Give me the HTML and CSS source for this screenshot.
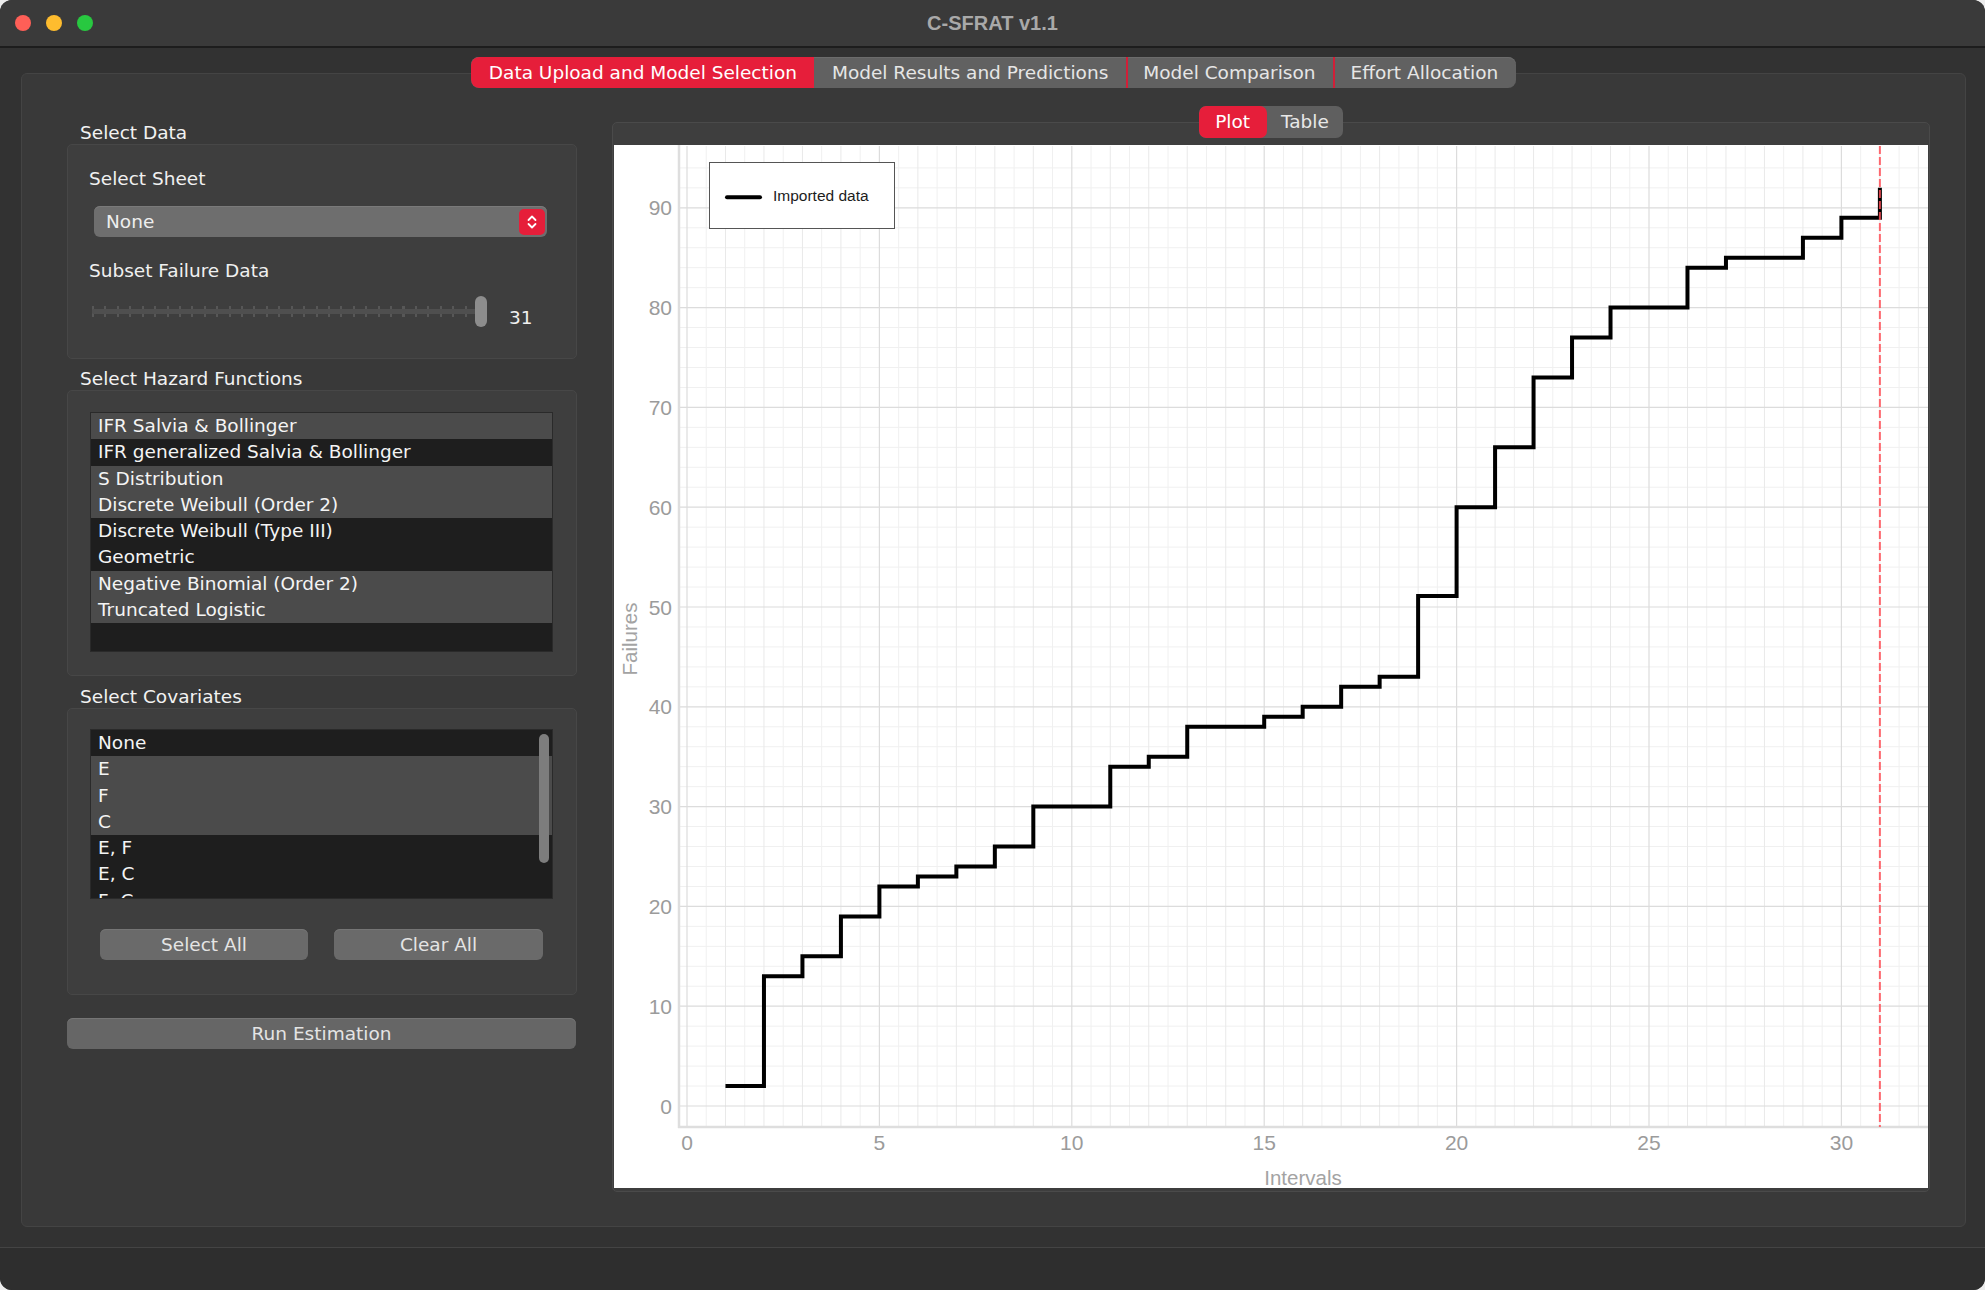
FILE: index.html
```html
<!DOCTYPE html>
<html>
<head>
<meta charset="utf-8">
<title>C-SFRAT v1.1</title>
<link rel="stylesheet" href="styles.css">
</head>
<body>
<div class="window">
  <div class="titlebar">
    <div class="lights">
      <span class="light red"></span>
      <span class="light yellow"></span>
      <span class="light green"></span>
    </div>
    <div class="title">C-SFRAT v1.1</div>
    <div></div>
  </div>

  <div class="main">
    <div class="tabbar">
      <div class="tab active">Data Upload and Model Selection</div>
      <div class="tab">Model Results and Predictions</div>
      <div class="tab sep">Model Comparison</div>
      <div class="tab sep">Effort Allocation</div>
    </div>

    <div class="pane">
      <div class="leftcol">
        <section class="group">
          <div class="group-title">Select Data</div>
          <div class="group-box box-data">
            <div class="label">Select Sheet</div>
            <div class="combo">
              <span>None</span>
              <span class="combo-btn">
                <svg width="12" height="20" viewBox="0 0 12 20"><path d="M2.5 8 L6 4.5 L9.5 8 M2.5 12 L6 15.5 L9.5 12" fill="none" stroke="#fff" stroke-width="1.8" stroke-linecap="round" stroke-linejoin="round"/></svg>
              </span>
            </div>
            <div class="label label-gap">Subset Failure Data</div>
            <div class="slider-row">
              <div class="slider">
                <div class="slider-ticks"></div>
                <div class="slider-groove"></div>
                <div class="slider-handle"></div>
              </div>
              <div class="slider-value">31</div>
            </div>
          </div>
        </section>

        <section class="group group-next">
          <div class="group-title">Select Hazard Functions</div>
          <div class="group-box box-hazard">
            <div class="list list-hazard">
              <div class="row g">IFR Salvia &amp; Bollinger</div>
              <div class="row">IFR generalized Salvia &amp; Bollinger</div>
              <div class="row g">S Distribution</div>
              <div class="row g">Discrete Weibull (Order 2)</div>
              <div class="row">Discrete Weibull (Type III)</div>
              <div class="row">Geometric</div>
              <div class="row g">Negative Binomial (Order 2)</div>
              <div class="row g">Truncated Logistic</div>
            </div>
          </div>
        </section>

        <section class="group group-next2">
          <div class="group-title">Select Covariates</div>
          <div class="group-box box-cov">
            <div class="list list-cov">
              <div class="row">None</div>
              <div class="row g">E</div>
              <div class="row g">F</div>
              <div class="row g">C</div>
              <div class="row">E, F</div>
              <div class="row">E, C</div>
              <div class="row">F, C</div>
              <div class="scroll-thumb"></div>
            </div>
            <div class="btn-row">
              <div class="btn btn-sel">Select All</div>
              <div class="btn btn-clear">Clear All</div>
            </div>
          </div>
        </section>

        <div class="btn btn-run">Run Estimation</div>
      </div>

      <div class="rightcol">
        <div class="seg">
          <div class="seg-btn seg-plot active">Plot</div>
          <div class="seg-btn seg-table">Table</div>
        </div>
        <div class="plotframe">
          <div class="canvas">
            <svg class="plot" width="1314" height="1043" viewBox="0 0 1314 1043">
              <path class="grid-minor" d="M92.24 1V982M130.72 1V982M169.2 1V982M207.68 1V982M246.16 1V982M284.64 1V982M323.12 1V982M361.6 1V982M400.08 1V982M438.56 1V982M477.04 1V982M515.52 1V982M554 1V982M592.48 1V982M630.96 1V982M669.44 1V982M707.92 1V982M746.4 1V982M784.88 1V982M823.36 1V982M861.84 1V982M900.32 1V982M938.8 1V982M977.28 1V982M1015.76 1V982M1054.24 1V982M1092.72 1V982M1131.2 1V982M1169.68 1V982M1208.16 1V982M1246.64 1V982M1285.12 1V982"/>
              <path class="grid-minor" d="M65 941.04H1314M65 921.08H1314M65 901.12H1314M65 881.16H1314M65 841.24H1314M65 821.28H1314M65 801.32H1314M65 781.36H1314M65 741.44H1314M65 721.48H1314M65 701.52H1314M65 681.56H1314M65 641.64H1314M65 621.68H1314M65 601.72H1314M65 581.76H1314M65 541.84H1314M65 521.88H1314M65 501.92H1314M65 481.96H1314M65 442.04H1314M65 422.08H1314M65 402.12H1314M65 382.16H1314M65 342.24H1314M65 322.28H1314M65 302.32H1314M65 282.36H1314M65 242.44H1314M65 222.48H1314M65 202.52H1314M65 182.56H1314M65 142.64H1314M65 122.68H1314M65 102.72H1314M65 82.76H1314M65 42.84H1314M65 22.88H1314"/>
              <path class="grid-unit" d="M111.48 1V982M149.96 1V982M188.44 1V982M226.92 1V982M303.88 1V982M342.36 1V982M380.84 1V982M419.32 1V982M496.28 1V982M534.76 1V982M573.24 1V982M611.72 1V982M688.68 1V982M727.16 1V982M765.64 1V982M804.12 1V982M881.08 1V982M919.56 1V982M958.04 1V982M996.52 1V982M1073.48 1V982M1111.96 1V982M1150.44 1V982M1188.92 1V982M1265.88 1V982M1304.36 1V982"/>
              <path class="grid-major" d="M73 1V982M265.4 1V982M457.8 1V982M650.2 1V982M842.6 1V982M1035 1V982M1227.4 1V982"/>
              <path class="grid-major" d="M65 961H1314M65 861.2H1314M65 761.4H1314M65 661.6H1314M65 561.8H1314M65 462H1314M65 362.2H1314M65 262.4H1314M65 162.6H1314M65 62.8H1314"/>
              <path class="axis" d="M65 0V983M64 982H1314"/>

              <rect class="legend-box" x="95.5" y="17.5" width="185" height="66"/>
              <path class="legend-line" d="M113 52.3H146"/>
              <text class="legend-text" x="159" y="55.8">Imported data</text>

              <path class="step" d="M111.48 941.04H149.96V831.26H188.44V811.3H226.92V771.38H265.4V741.44H303.88V731.46H342.36V721.48H380.84V701.52H419.32V661.6H496.28V621.68H534.76V611.7H573.24V581.76H650.2V571.78H688.68V561.8H727.16V541.84H765.64V531.86H804.12V451.02H842.6V362.2H881.08V302.32H919.56V232.46H958.04V192.54H996.52V162.6H1073.48V122.68H1111.96V112.7H1188.92V92.74H1227.4V72.78H1265.88V42.84"/>
              <path class="cutoff" d="M1265.88 1V982"/>

              <text class="tick" x="58" y="968.5" text-anchor="end">0</text>
              <text class="tick" x="58" y="868.7" text-anchor="end">10</text>
              <text class="tick" x="58" y="768.9" text-anchor="end">20</text>
              <text class="tick" x="58" y="669.1" text-anchor="end">30</text>
              <text class="tick" x="58" y="569.3" text-anchor="end">40</text>
              <text class="tick" x="58" y="469.5" text-anchor="end">50</text>
              <text class="tick" x="58" y="369.7" text-anchor="end">60</text>
              <text class="tick" x="58" y="269.9" text-anchor="end">70</text>
              <text class="tick" x="58" y="170.1" text-anchor="end">80</text>
              <text class="tick" x="58" y="70.3" text-anchor="end">90</text>

              <text class="tick" x="73" y="1004.5" text-anchor="middle">0</text>
              <text class="tick" x="265.4" y="1004.5" text-anchor="middle">5</text>
              <text class="tick" x="457.8" y="1004.5" text-anchor="middle">10</text>
              <text class="tick" x="650.2" y="1004.5" text-anchor="middle">15</text>
              <text class="tick" x="842.6" y="1004.5" text-anchor="middle">20</text>
              <text class="tick" x="1035" y="1004.5" text-anchor="middle">25</text>
              <text class="tick" x="1227.4" y="1004.5" text-anchor="middle">30</text>

              <text class="axis-label" x="689" y="1039.5" text-anchor="middle">Intervals</text>
              <text class="axis-label" transform="translate(15 494) rotate(-90)" x="0" y="7.5" text-anchor="middle">Failures</text>
            </svg>
          </div>
        </div>
      </div>
    </div>
  </div>

  <div class="statusbar"></div>
</div>
</body>
</html>
```

FILE: styles.css
```css
* {
  box-sizing: border-box;
  margin: 0;
  padding: 0;
}

html,
body {
  width: 1985px;
  height: 1290px;
  overflow: hidden;
  background: #ececec;
}

body {
  font-family: "DejaVu Sans", "Liberation Sans", sans-serif;
  font-size: 18.5px;
  color: #f0f0f0;
}

.window {
  width: 1985px;
  height: 1290px;
  border-radius: 12px;
  background: #323232;
  display: flex;
  flex-direction: column;
  overflow: hidden;
}

/* Title bar */
.titlebar {
  height: 48px;
  flex: none;
  background: #3a3a3a;
  border-bottom: 2px solid #1d1d1d;
  display: grid;
  grid-template-columns: 1fr auto 1fr;
  align-items: center;
}

.lights {
  display: flex;
  gap: 15px;
  padding-left: 15px;
}

.light {
  width: 16px;
  height: 16px;
  border-radius: 50%;
  display: block;
}

.light.red { background: #fe5f57; }
.light.yellow { background: #febc2e; }
.light.green { background: #28c840; }

.title {
  font-family: "Liberation Sans", Arial, sans-serif;
  font-weight: bold;
  font-size: 20px;
  color: #a9a9a9;
}

/* Main area */
.main {
  flex: 1;
  display: flex;
  flex-direction: column;
  padding: 9px 19px 20px 21px;
}

.tabbar {
  align-self: center;
  display: flex;
  height: 31px;
  border-radius: 8px;
  overflow: hidden;
  background: #616161;
  position: relative;
  z-index: 1;
  box-shadow: inset 0 1px 0 #6c6c6c;
}

.tab {
  padding: 0 17.5px;
  line-height: 31px;
  color: #e6e6e6;
  white-space: nowrap;
}

.tab.active {
  background: #e61e3a;
  color: #ffffff;
  border-radius: 8px 0 0 8px;
}

.tab.sep {
  border-left: 2px solid #d21f38;
  padding-left: 15.5px;
}

.pane {
  margin-top: -15px;
  flex: 1;
  display: flex;
  gap: 35px;
  padding: 32px 35px 34px 45px;
  border: 1px solid #444444;
  border-radius: 6px;
  background: #393939;
}

/* Left column */
.leftcol {
  width: 510px;
  flex: none;
  display: flex;
  flex-direction: column;
  margin-top: 16px;
}

.group-title {
  height: 22px;
  line-height: 22px;
  padding-left: 13px;
  color: #f2f2f2;
  white-space: nowrap;
}

.group-next {
  margin-top: 9px;
}

.group-next2 {
  margin-top: 10px;
}

.group-box {
  border: 1px solid #474747;
  border-radius: 5px;
  background: #3e3e3e;
}

.box-data {
  padding: 23px 21px 31px 21px;
}

.label {
  line-height: 22px;
  color: #f0f0f0;
}

.label-gap {
  margin-top: 23px;
}

.combo {
  margin: 16px 0 0 5px;
  width: 453px;
  height: 31px;
  background: #6e6e6e;
  border-radius: 6px;
  display: flex;
  align-items: center;
  justify-content: space-between;
  padding: 0 2px 0 12px;
  color: #eeeeee;
  box-shadow: inset 0 1px 0 #7a7a7a;
}

.combo-btn {
  width: 26px;
  height: 26px;
  border-radius: 5px;
  background: #e61e3a;
  display: flex;
  align-items: center;
  justify-content: center;
}

.combo-btn svg {
  display: block;
}

.slider-row {
  margin: 14px 0 0 3px;
  display: flex;
  align-items: flex-start;
  height: 31px;
}

.slider {
  position: relative;
  width: 396px;
  height: 31px;
  flex: none;
}

.slider-ticks {
  position: absolute;
  left: 0;
  top: 10px;
  width: 388px;
  height: 11px;
  background: repeating-linear-gradient(90deg, #575757 0 2px, transparent 2px 12.42px);
}

.slider-groove {
  position: absolute;
  left: 0;
  top: 13px;
  width: 388px;
  height: 5px;
  border-radius: 2px;
  background: #4f4f4f;
}

.slider-handle {
  position: absolute;
  left: 383px;
  top: 0;
  width: 12px;
  height: 31px;
  border-radius: 6px;
  background: #8d8d8d;
}

.slider-value {
  margin: 11px 0 0 21px;
  line-height: 22px;
  color: #f0f0f0;
}

/* Lists */
.box-hazard {
  padding: 21px 0 23px 22px;
}

.box-cov {
  padding: 20px 0 34px 22px;
}

.list {
  width: 463px;
  background: #1e1e1e;
  border: 1px solid #2a2a2a;
  overflow: hidden;
}

.list-hazard {
  height: 240px;
}

.list-cov {
  height: 170px;
  position: relative;
}

.row {
  height: 26.3px;
  line-height: 26.3px;
  padding-left: 7px;
  color: #f4f4f4;
  white-space: nowrap;
}

.row.g {
  background: #4b4b4b;
}

.scroll-thumb {
  position: absolute;
  right: 3px;
  top: 4px;
  width: 10px;
  height: 129px;
  border-radius: 5px;
  background: #7d7d7d;
}

/* Buttons */
.btn-row {
  display: flex;
  gap: 26px;
  margin: 30px 0 0 10px;
}

.btn {
  height: 31px;
  line-height: 31px;
  text-align: center;
  border-radius: 6px;
  background: #6a6a6a;
  color: #e4e4e4;
  box-shadow: inset 0 1px 0 #757575;
  white-space: nowrap;
}

.btn-sel {
  width: 208px;
}

.btn-clear {
  width: 209px;
}

.btn-run {
  margin-top: 23px;
  width: 509px;
  background: #666666;
}

/* Right column */
.rightcol {
  flex: 1;
  display: flex;
  flex-direction: column;
}

.seg {
  align-self: center;
  display: flex;
  height: 32px;
  border-radius: 7px;
  overflow: hidden;
  background: #5f5f5f;
  position: relative;
  z-index: 1;
}

.seg-btn {
  line-height: 32px;
  color: #e8e8e8;
}

.seg-plot {
  padding: 0 16.5px;
}

.seg-table {
  padding: 0 14.5px;
}

.seg-btn.active {
  background: #e61e3a;
  color: #ffffff;
  border-radius: 7px;
}

.plotframe {
  margin-top: -16px;
  flex: 1;
  border: 1px solid #4a4a4a;
  border-radius: 5px;
  background: #3e3e3e;
  padding: 22px 1px 3px 1px;
}

.canvas {
  width: 1314px;
  height: 1043px;
  background: #ffffff;
}

.plot {
  display: block;
}

.grid-minor {
  stroke: #f0f0f0;
  stroke-width: 1;
  fill: none;
}

.grid-unit {
  stroke: #e9e9e9;
  stroke-width: 1;
  fill: none;
}

.grid-major {
  stroke: #dcdcdc;
  stroke-width: 1.2;
  fill: none;
}

.axis {
  stroke: #dedede;
  stroke-width: 2.5;
  fill: none;
}

.legend-box {
  fill: #ffffff;
  stroke: #555555;
  stroke-width: 1;
}

.legend-line {
  stroke: #000000;
  stroke-width: 4;
  stroke-linecap: round;
  fill: none;
}

.legend-text {
  font-family: "Liberation Sans", Arial, sans-serif;
  font-size: 15.5px;
  fill: #1c1c1c;
}

.step {
  stroke: #000000;
  stroke-width: 4;
  fill: none;
  stroke-linejoin: miter;
}

.cutoff {
  stroke: #ff4f57;
  stroke-opacity: 0.85;
  stroke-width: 2;
  stroke-dasharray: 8 3;
  fill: none;
}

.tick {
  font-family: "Liberation Sans", Arial, sans-serif;
  font-size: 21px;
  fill: #9b9b9b;
}

.axis-label {
  font-family: "Liberation Sans", Arial, sans-serif;
  font-size: 20.5px;
  fill: #a3a3a3;
}

/* Status bar */
.statusbar {
  height: 43px;
  flex: none;
  background: #2e2e2e;
  border-top: 1px solid #444444;
}
```
